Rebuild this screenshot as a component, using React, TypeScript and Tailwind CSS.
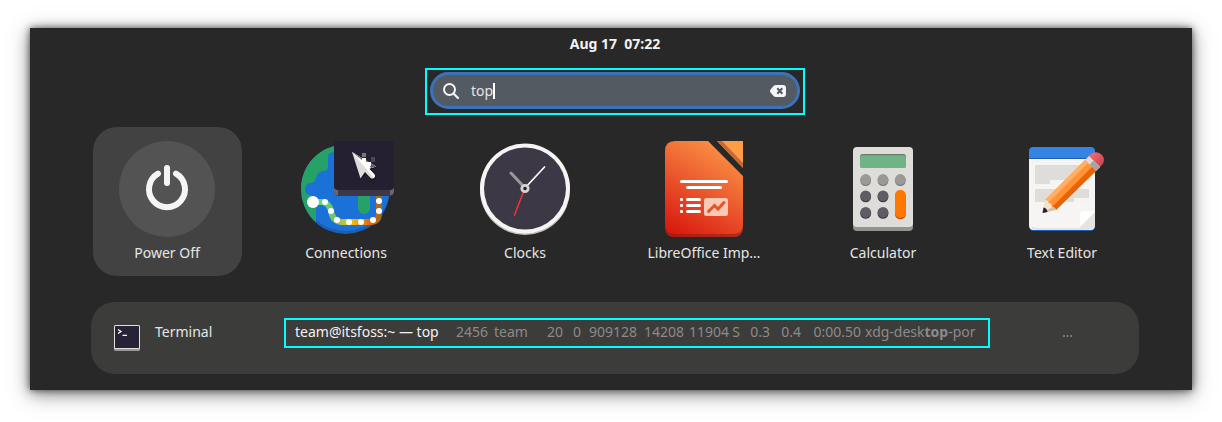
import { useState } from "react";
import type { ReactNode } from "react";

function PowerIcon() {
  return (
    <svg viewBox="0 0 96 96" className="size-24" aria-hidden="true">
      <circle cx="48" cy="48" r="48" fill="#535353" />
      <path d="M39 32.6A18 18 0 1 0 57 32.6" fill="none" stroke="#f6f5f4" strokeWidth="6" strokeLinecap="round" />
      <path d="M48 27V42" stroke="#f6f5f4" strokeWidth="6" strokeLinecap="round" />
    </svg>
  );
}

const routeStops = [
  [27, 61],
  [33, 70],
  [39, 79],
  [51, 81],
  [63, 81],
  [75, 79],
  [81, 70],
  [81, 60],
];

function ConnectionsIcon() {
  return (
    <svg viewBox="0 0 96 96" className="size-24" aria-hidden="true">
      <defs>
        <linearGradient id="route" x1="15" x2="84" y1="0" y2="0" gradientUnits="userSpaceOnUse">
          <stop offset="0" stopColor="#57e389" />
          <stop offset="0.3" stopColor="#6fc46b" />
          <stop offset="0.55" stopColor="#f0c419" />
          <stop offset="0.85" stopColor="#e66100" />
          <stop offset="1" stopColor="#8a7030" />
        </linearGradient>
        <clipPath id="globe">
          <circle cx="47.5" cy="48" r="44.5" />
        </clipPath>
      </defs>
      <circle cx="47.5" cy="48.5" r="44.5" fill="#1a5fb4" />
      <g clipPath="url(#globe)">
        <circle cx="47.5" cy="45.5" r="44.5" fill="#1c71d8" />
        <path
          d="M0 0H36V10Q35 12 32 12Q30 13 30 18V27Q29 30 25 30Q19 31 18 37Q17 42 12 42Q7 43 7 48Q7 53 12 54Q16 55 18 59V86H0Z"
          fill="#26a269"
        />
        <path d="M60 50H72V67A6 6 0 0 1 60 67Z" fill="#26a269" />
      </g>
      <path
        d="M15 61H25Q31 62 33 70Q35 81 44 81H72Q81 81 81 72V53"
        fill="none"
        stroke="url(#route)"
        strokeWidth="6"
      />
      <path d="M78 53H84V62H78Z" fill="#8a7030" opacity="0.6" />
      <circle cx="15" cy="61" r="6" fill="#fff" />
      {routeStops.map(([x, y]) => (
        <circle key={`${x}-${y}`} cx={x} cy={y} r="3" fill="#fff" />
      ))}
      <path d="M36 46H96V50Q96 55 91 55H41Q36 55 36 50Z" fill="#3d3846" />
      <path d="M36 47H40V54.500Q36 54 36 50ZM96 47H92V54.500Q96 54 96 50Z" fill="#6a6473" />
      <rect x="36" y="0" width="60" height="49" rx="4" fill="#241f31" />
      <path d="M64 12H68V16H64Z" fill="#77767b" />
      <path d="M73 16H77V21H73Z" fill="#4a4753" />
      <path d="M55 12L63 39L68 32.500L73 39Q78 40 78 35L72 29L79 26Z" fill="#000" opacity="0.4" />
      <path d="M54 11L62.500 37.500L67 31L72.500 37Q75 38.500 76.500 36.500T76 33L71 27.700L78 25.500Z" fill="#deddda" />
      <path d="M54 11L78 25.500L71 27.700L76 33Q77.500 35 76 37Z" fill="#fff" />
      <path d="M54 11L78 25.500L73 27L69 21L64 19Z" fill="#5e5c64" />
      <path d="M64 17H68V21H64ZM68 21H73V25H68Z" fill="#fff" />
    </svg>
  );
}

function ClocksIcon() {
  return (
    <svg viewBox="0 0 96 96" className="size-24" aria-hidden="true">
      <circle cx="48" cy="49" r="45" fill="#c0bfbc" />
      <circle cx="48" cy="47.5" r="45" fill="#f6f5f4" />
      <circle cx="48" cy="47.5" r="41" fill="#3d3846" />
      <path d="M48 47L34 32" stroke="#9a9996" strokeWidth="3" strokeLinecap="round" />
      <path d="M48 47L67.5 26" stroke="#fff" strokeWidth="1.7" strokeLinecap="round" />
      <path d="M48 47L37.5 74" stroke="#ed333b" strokeWidth="1.6" strokeLinecap="round" />
      <circle cx="48" cy="47.5" r="3.2" fill="#241f31" stroke="#d5d4cf" strokeWidth="2.8" />
    </svg>
  );
}

function ImpressIcon() {
  return (
    <svg viewBox="0 0 96 96" className="size-24" aria-hidden="true">
      <defs>
        <linearGradient id="impress" x1="22" y1="94" x2="78" y2="0" gradientUnits="userSpaceOnUse">
          <stop offset="0" stopColor="#d91a10" />
          <stop offset="0.55" stopColor="#ee6332" />
          <stop offset="1" stopColor="#ff9c48" />
        </linearGradient>
      </defs>
      <path d="M19 0H52L87 35V86Q87 96 77 96H19Q9 96 9 86V10Q9 0 19 0Z" fill="url(#impress)" />
      <path d="M9 83Q9 93 19 93H77Q87 93 87 83V86Q87 96 77 96H19Q9 96 9 86Z" fill="#8b2114" opacity="0.6" />
      <path d="M61 0H87V27Z" fill="#ff9c48" />
      <path d="M61 0H66L87 22V27Z" fill="#c46b35" />
      <g fill="#fff">
        <rect x="24" y="39" width="48" height="3" rx="1.5" />
        <rect x="30" y="45" width="36" height="3" rx="1.5" />
        {[57, 63, 69].map((y) => (
          <g key={y}>
            <rect x="24" y={y} width="3" height="3" rx="1" />
            <rect x="30" y={y} width="15" height="3" rx="1.5" />
          </g>
        ))}
      </g>
      <rect x="48" y="57" width="24" height="18" rx="2.5" fill="#fcc9b4" />
      <path d="M52.5 70.5L58.5 64.5L62 68L68 61.5" fill="none" stroke="#e5532b" strokeWidth="3" strokeLinecap="round" />
    </svg>
  );
}

function CalculatorIcon() {
  const keys = [
    { x: 30.7, y: 38.7, top: "#9a9996", side: "#77767b" },
    { x: 48, y: 38.7, top: "#9a9996", side: "#77767b" },
    { x: 65.3, y: 38.7, top: "#9a9996", side: "#77767b" },
    { x: 30.7, y: 55, top: "#5e5c64", side: "#3d3846" },
    { x: 48, y: 55, top: "#5e5c64", side: "#3d3846" },
    { x: 30.7, y: 71.5, top: "#5e5c64", side: "#3d3846" },
    { x: 48, y: 71.5, top: "#5e5c64", side: "#3d3846" },
  ];
  return (
    <svg viewBox="0 0 96 96" className="size-24" aria-hidden="true">
      <rect x="18" y="20" width="60" height="70" rx="4" fill="#949390" />
      <rect x="18" y="6" width="60" height="80" rx="4" fill="#deddda" />
      <rect x="25" y="13" width="46" height="14" rx="2.5" fill="#6b7d72" />
      <rect x="25" y="14.3" width="46" height="12.7" rx="2.5" fill="#70b384" />
      {keys.map((key) => (
        <g key={`${key.x}-${key.y}`}>
          <circle cx={key.x} cy={key.y + 0.9} r="5.4" fill={key.side} />
          <circle cx={key.x} cy={key.y - 0.2} r="5.4" fill={key.top} />
        </g>
      ))}
      <rect x="60" y="50" width="10.8" height="28.2" rx="5" fill="#c64600" />
      <rect x="60" y="49" width="10.8" height="28" rx="5" fill="#ff7800" />
    </svg>
  );
}

function TextEditorIcon() {
  return (
    <svg viewBox="0 0 96 96" className="size-24" aria-hidden="true">
      <defs>
        <linearGradient id="eraser" x1="76" y1="13" x2="88" y2="25" gradientUnits="userSpaceOnUse">
          <stop offset="0" stopColor="#f26b70" />
          <stop offset="1" stopColor="#c9444c" />
        </linearGradient>
      </defs>
      <rect x="15" y="6" width="66" height="84" rx="4.5" fill="#1a5fb4" />
      <path d="M19.5 6H76.5Q81 6 81 10.500V17H15V10.500Q15 6 19.500 6Z" fill="#3584e4" />
      <path d="M15 18H81V84Q81 89 76.500 89H19.500Q15 89 15 84Z" fill="#f6f5f4" />
      <path d="M18 86Q19 88 22 88H75" fill="none" stroke="#deddda" strokeWidth="1.4" />
      <path d="M21 24H75V39H36V43H21ZM21 48H75V57H60V61H21Z" fill="#deddda" />
      <path d="M66 85V75Q66 70 71 70H81V73L68 86Z" fill="#fff" />
      <path d="M66 86L81 71V84Q81 88 76.500 88H66Z" fill="#e5e4e1" />
      <path d="M74 16L77 13Q83 9 88 14Q92 19 88 24L85 27Z" fill="url(#eraser)" />
      <path d="M71 19L75 15L86 26L82 30Z" fill="#deddda" />
      <path d="M75.500 23.500L79.500 19.500L86 26L82 30Z" fill="#a6a5a2" />
      <path d="M31 59L71 19L82 30L42 69Z" fill="#ff9336" />
      <path d="M31 59L71 19L74 22L34 62Z" fill="#ffb066" />
      <path d="M38 66L78 26L82 30L42 69Z" fill="#e86304" />
      <path d="M31 59Q34 59 34.500 62Q37.500 62 38 66Q41 66 42 69L28.500 72Z" fill="#f2e5d0" />
      <path d="M38 66Q41 66 42 69L28.500 72Z" fill="#d8c4a4" />
      <path d="M29.500 66.500Q33 67 33.500 71L28.500 72Z" fill="#241f31" />
    </svg>
  );
}

function TerminalIcon() {
  return (
    <svg viewBox="0 0 26 26" className="size-[26px]" aria-hidden="true">
      <rect x="0" y="12" width="26" height="14" rx="1.500" fill="#9a9996" />
      <rect x="0" y="0" width="26" height="24" rx="1.500" fill="#e2e0dc" />
      <rect x="1" y="1" width="24" height="22" rx="0.500" fill="#282236" />
      <path d="M4 4.500L7 6.500L4 8.500M8.500 10.300H13" fill="none" stroke="#fff" strokeWidth="1.300" />
    </svg>
  );
}

function SearchIcon() {
  return (
    <svg viewBox="0 0 16 16" className="size-4 shrink-0" fill="none" aria-hidden="true">
      <circle cx="6.500" cy="6.500" r="5.500" stroke="#f6f5f4" strokeWidth="2" />
      <path d="M10.500 10.500L15 15" stroke="#f6f5f4" strokeWidth="2.200" strokeLinecap="round" />
    </svg>
  );
}

function ClearIcon() {
  return (
    <svg viewBox="0 0 16 12" className="h-3 w-4" aria-hidden="true">
      <path d="M6 0H13Q16 0 16 3V9Q16 12 13 12H6Q4.500 12 3.500 11L0.600 7.500Q-0.600 6 0.600 4.500L3.500 1Q4.500 0 6 0Z" fill="#f6f5f4" />
      <path d="M7.300 3.300L12.300 8.700M12.300 3.300L7.300 8.700" stroke="#535a62" strokeWidth="2" />
    </svg>
  );
}

const apps: { name: string; icon: ReactNode; selected?: boolean }[] = [
  { name: "Power Off", icon: <PowerIcon />, selected: true },
  { name: "Connections", icon: <ConnectionsIcon /> },
  { name: "Clocks", icon: <ClocksIcon /> },
  { name: "LibreOffice Imp…", icon: <ImpressIcon /> },
  { name: "Calculator", icon: <CalculatorIcon /> },
  { name: "Text Editor", icon: <TextEditorIcon /> },
];

export default function App() {
  const [query, setQuery] = useState("top");

  return (
    <div className="bg-white px-[30px] pt-7 pb-8 font-['Noto_Sans','Open_Sans',sans-serif] text-sm text-[#e6e6e5]">
      <main className="flex flex-col bg-[#282828] pt-2 pr-[53px] pb-4 pl-[61px] shadow-[0_0_7px_rgba(0,0,0,0.6),0_4px_18px_rgba(0,0,0,0.5)]">
        <time className="text-center text-sm leading-4 font-bold whitespace-pre text-[#f2f2f1]">Aug 17  07:22</time>

        <div className="mx-auto mt-4 w-full max-w-[380px] border-2 border-[#00ffff] px-[3px] pt-[2px] pb-1">
          <div className="flex h-[37px] items-center rounded-full border-[3px] border-[#3b73ba] bg-[#535a62] pr-[11px] pl-[10px]">
            <label className="flex min-w-0 flex-1 cursor-text items-center gap-3">
              <SearchIcon />
              <span className="flex min-w-0 items-center">
                <input
                  type="text"
                  aria-label="Search"
                  value={query}
                  onChange={(event) => setQuery(event.target.value)}
                  className="max-w-full min-w-0 bg-transparent leading-5 caret-transparent outline-none [field-sizing:content]"
                />
                <span className="h-4 w-[2px] shrink-0 bg-white" />
              </span>
            </label>
            <button type="button" aria-label="Clear search" onClick={() => setQuery("")}>
              <ClearIcon />
            </button>
          </div>
        </div>

        <section aria-label="Applications" className="mt-3 flex justify-between px-[2px]">
          {apps.map((app) => (
            <button
              key={app.name}
              type="button"
              className={`flex h-[149px] w-[149px] flex-col items-center rounded-3xl pt-[14px] pr-px ${app.selected ? "bg-[#424242]" : ""}`}
            >
              {app.icon}
              <span className="mt-[6px] leading-5 whitespace-nowrap">{app.name}</span>
            </button>
          ))}
        </section>

        <section
          aria-label="Terminal results"
          className="mt-[26px] flex h-[72px] items-start rounded-3xl bg-[#3c3c3a] pt-4 pr-[66px] pl-[23px]"
        >
          <div className="flex w-[170px] shrink-0 items-start gap-[15px]">
            <div className="pt-[7px]">
              <TerminalIcon />
            </div>
            <span className="pt-1 leading-5">Terminal</span>
          </div>
          <button
            type="button"
            className="flex h-[30px] w-[706px] items-center border-2 border-[#00ffff] pb-[2px] pl-[9px] text-left leading-5 whitespace-pre text-[#8b8b8a]"
          >
            <span className="w-[161px] text-[#f2f2f1]">team@itsfoss:~ — top</span>
            <span className="w-[38px]">2456</span>
            <span className="w-[35px]">team</span>
            <span className="w-[34px] text-right">20</span>
            <span className="w-[18px] text-right">0</span>
            <span className="w-[56px] text-right">909128</span>
            <span className="w-[47px] text-right">14208</span>
            <span className="w-[45px] text-right">11904</span>
            <span className="w-[11px] text-right">S</span>
            <span className="w-[30px] text-right">0.3</span>
            <span className="w-[31px] text-right">0.4</span>
            <span className="w-[64px] pr-1 text-right">0:00.50</span>
            <span>
              xdg-desk<b>top</b>-por
            </span>
          </button>
          <span className="ml-auto pt-1 leading-5 text-[#8b8b8a]">…</span>
        </section>
      </main>
    </div>
  );
}
